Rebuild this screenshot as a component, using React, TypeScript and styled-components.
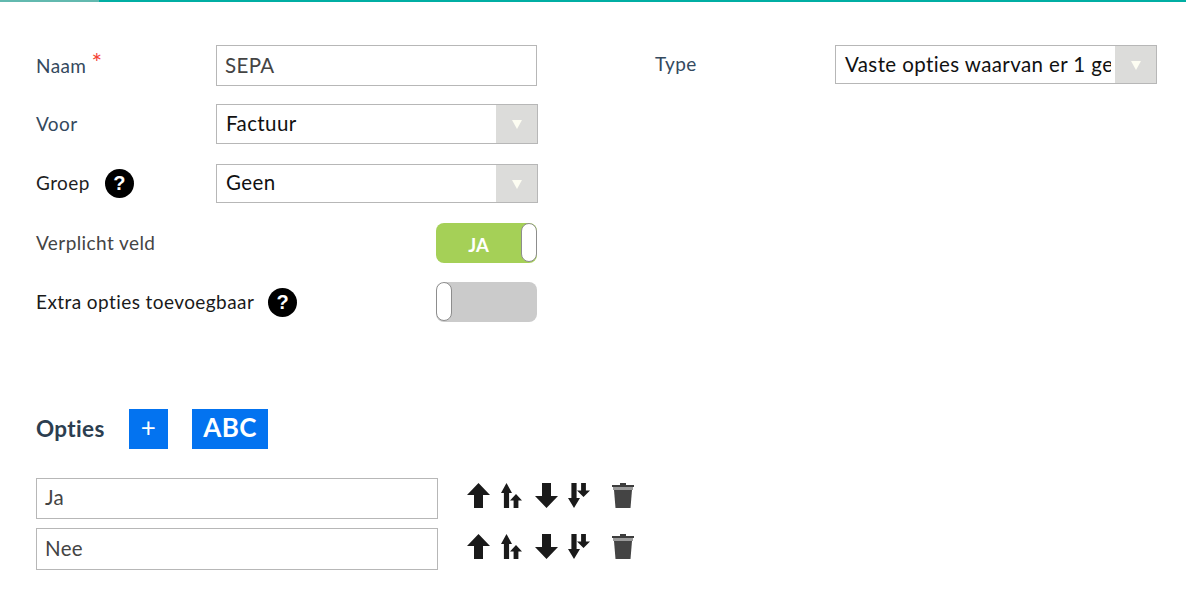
import React from "react";
import styled, { createGlobalStyle } from "styled-components";

const Global = createGlobalStyle`
  html, body { margin: 0; padding: 0; background: #fff; }
  body { font-family: "Lato", "Liberation Sans", sans-serif; font-size: 18px; width: 1186px; height: 606px; overflow: hidden; }
`;

const TopBar = styled.div`display: flex; height: 2px;`;
const TopBarStart = styled.div`width: 99px; background: #62b9af;`;
const TopBarRest = styled.div`flex: 1; background: #00aea3;`;

const Page = styled.div`padding: 43px 29px 0 36px;`;
const Columns = styled.div`display: grid; grid-template-columns: 502px 502px; column-gap: 117px;`;
const Column = styled.div`display: flex; flex-direction: column;`;

const Row = styled.div<{ $h: number; $after: number }>`
  display: flex; align-items: center; height: ${p => p.$h}px; margin-bottom: ${p => p.$after}px;
`;
const Label = styled.div<{ $color?: string; $w?: number; $top?: number }>`
  color: ${p => p.$color || "#34495e"}; font-size: 19px; letter-spacing: .42px; white-space: nowrap;
  ${p => p.$w ? `width: ${p.$w}px; flex: none;` : ""}
  display: flex; align-items: center; line-height: 22px; margin-top: ${p => p.$top ?? -1}px;
`;
const Star = styled.span`color: #f44336; font-size: 25px; line-height: 20px; margin: -8px 0 0 5px;`;
const Help = styled.span<{ $ml: number }>`
  width: 29px; height: 29px; border-radius: 50%; background: #000; color: #fff; flex: none;
  display: inline-flex; align-items: center; justify-content: center; margin: 1px 0 0 ${p => p.$ml}px;
  font: bold 20px "Liberation Sans", sans-serif; letter-spacing: 0;
`;
const Spacer = styled.div`flex: 1;`;

const TextBox = styled.div<{ $w: number; $h: number; $pb?: number }>`
  box-sizing: border-box; width: ${p => p.$w}px; height: ${p => p.$h}px; flex: none;
  border: 1px solid #b7b7b7; display: flex; align-items: center; padding: 0 0 ${p => p.$pb ?? 3}px 8px;
  color: #444; font-size: 20.5px; letter-spacing: .35px;
`;
const Select = styled.div<{ $w: number; $h: number }>`
  box-sizing: border-box; width: ${p => p.$w}px; height: ${p => p.$h}px; flex: none;
  border: 1px solid #b7b7b7; display: flex; align-items: stretch;
`;
const SelectText = styled.div<{ $pb?: number }>`
  flex: 1; min-width: 0; overflow: hidden; white-space: nowrap; margin-right: 4px; padding: 0 0 ${p => p.$pb ?? 3}px 9px;
  display: flex; align-items: center; color: #111; font-size: 20.5px; letter-spacing: .4px;
`;
const SelectArrow = styled.div`
  width: 41px; flex: none; background: #dcdcda; display: flex; align-items: center; justify-content: center;
  &::after { content: ""; border-left: 5.5px solid transparent; border-right: 5.5px solid transparent; border-top: 9px solid #fdfdf2; margin-top: 1px; filter: blur(.5px); }
`;

const Toggle = styled.div<{ $on: boolean }>`
  box-sizing: border-box; width: 101px; height: 40px; border-radius: 8px; flex: none; overflow: hidden;
  background: ${p => p.$on ? "#a5d057" : "#cbcbcb"}; display: flex; align-items: stretch;
  flex-direction: ${p => p.$on ? "row" : "row-reverse"}; margin-right: 1px;
`;
const ToggleText = styled.div`
  flex: 1; display: flex; align-items: center; justify-content: center; color: #fff; font-weight: 700; font-size: 18.5px; padding-top: 4px; box-sizing: border-box;
`;
const Knob = styled.div`
  box-sizing: border-box; width: 16px; background: #fff; border: 1px solid #8d8d8d; border-radius: 8px; margin-bottom: 1px;
`;

const OptionsHead = styled.div`display: flex; align-items: center; height: 41px; margin-top: 86px; margin-bottom: 29px;`;
const OptionsTitle = styled.div`color: #2c3e50; font-weight: 700; font-size: 22.5px; letter-spacing: .35px; width: 93px;`;
const BlueButton = styled.div<{ $w: number; $fs: number; $ml: number; $weight: number }>`
  box-sizing: border-box; width: ${p => p.$w}px; height: 40px; margin-left: ${p => p.$ml}px;
  background: #0373f0; color: #fff; display: flex; align-items: center; justify-content: center; padding-bottom: 3px;
  font-size: ${p => p.$fs}px; font-weight: ${p => p.$weight}; letter-spacing: .3px;
`;

const OptionRow = styled.div<{ $h: number; $after: number }>`
  display: flex; height: ${p => p.$h}px; margin-bottom: ${p => p.$after}px;
`;
const Actions = styled.div<{ $top: number }>`display: flex; margin: ${p => p.$top}px 0 0 29px; height: 25px; align-items: flex-start;`;
const Icon = styled.svg<{ $ml: number; $w: number }>`
  display: block; width: ${p => p.$w}px; height: 25px; margin-left: ${p => p.$ml}px; filter: blur(.6px);
`;

const up = (cx: number, top: number, bottom: number, hw: number, st: number, head: number) =>
  `M${cx} ${top}L${cx + hw} ${top + head}H${cx + st}V${bottom}H${cx - st}V${top + head}H${cx - hw}Z`;
const down = (cx: number, top: number, bottom: number, hw: number, st: number, head: number) =>
  `M${cx} ${bottom}L${cx + hw} ${bottom - head}H${cx + st}V${top}H${cx - st}V${bottom - head}H${cx - hw}Z`;

const RowIcons = ({ top }: { top: number }) => (
  <Actions $top={top}>
    <Icon $ml={0} $w={23} viewBox="0 0 23 25"><path fill="#1a1a1a" d={up(11.5, 0, 25, 11.5, 4.5, 12)} /></Icon>
    <Icon $ml={11} $w={21} viewBox="0 0 21 25">
      <path fill="#1a1a1a" d={up(5.5, 0, 25, 5.5, 2.6, 10)} />
      <path fill="#1a1a1a" d={up(15, 11, 25, 6, 2.4, 6.5)} />
    </Icon>
    <Icon $ml={13} $w={23} viewBox="0 0 23 25"><path fill="#1a1a1a" d={down(11.5, 0, 25, 11.5, 4.5, 12)} /></Icon>
    <Icon $ml={10} $w={22} viewBox="0 0 22 25">
      <path fill="#1a1a1a" d={down(6, 0, 25, 6, 2.6, 10)} />
      <path fill="#1a1a1a" d={down(15.5, 0, 14, 6.5, 2.4, 6.5)} />
    </Icon>
    <Icon $ml={22} $w={22} viewBox="0 0 22 25">
      <path fill="#3d3d3d" d="M8 0h6v2h8v2H0V2h8z" />
      <path fill="#9a9a9a" d="M1 4h20v3H1z" />
      <path fill="#444" d="M2 7h18l-1.5 18h-15z" />
    </Icon>
  </Actions>
);

export default function App() {
  return (
    <>
      <Global />
      <TopBar><TopBarStart /><TopBarRest /></TopBar>
      <Page>
        <Columns>
          <Column>
            <Row $h={41} $after={18}>
              <Label $w={180} $top={1}>Naam<Star>*</Star></Label>
              <TextBox $w={321} $h={41} $pb={1}>SEPA</TextBox>
            </Row>
            <Row $h={40} $after={20}>
              <Label $w={180}>Voor</Label>
              <Select $w={322} $h={40}><SelectText>Factuur</SelectText><SelectArrow /></Select>
            </Row>
            <Row $h={39} $after={20}>
              <Label $w={180} $color="#1f1f1f">Groep<Help $ml={15}>?</Help></Label>
              <Select $w={322} $h={39}><SelectText>Geen</SelectText><SelectArrow /></Select>
            </Row>
            <Row $h={40} $after={19}>
              <Label $color="#444">Verplicht veld</Label>
              <Spacer />
              <Toggle $on><ToggleText>JA</ToggleText><Knob /></Toggle>
            </Row>
            <Row $h={40} $after={0}>
              <Label $color="#1a1a1a">Extra opties toevoegbaar<Help $ml={14}>?</Help></Label>
              <Spacer />
              <Toggle $on={false}><ToggleText /><Knob /></Toggle>
            </Row>
          </Column>
          <Column>
            <Row $h={39} $after={0}>
              <Label $w={180}>Type</Label>
              <Select $w={322} $h={39}><SelectText $pb={1}>Vaste opties waarvan er 1 ge</SelectText><SelectArrow /></Select>
            </Row>
          </Column>
        </Columns>
        <OptionsHead>
          <OptionsTitle>Opties</OptionsTitle>
          <BlueButton $w={39} $fs={26} $ml={0} $weight={400}>+</BlueButton>
          <BlueButton $w={76} $fs={26} $ml={24} $weight={700}>ABC</BlueButton>
        </OptionsHead>
        <OptionRow $h={41} $after={9}>
          <TextBox $w={402} $h={41}>Ja</TextBox>
          <RowIcons top={5} />
        </OptionRow>
        <OptionRow $h={42} $after={0}>
          <TextBox $w={402} $h={42}>Nee</TextBox>
          <RowIcons top={6} />
        </OptionRow>
      </Page>
    </>
  );
}
